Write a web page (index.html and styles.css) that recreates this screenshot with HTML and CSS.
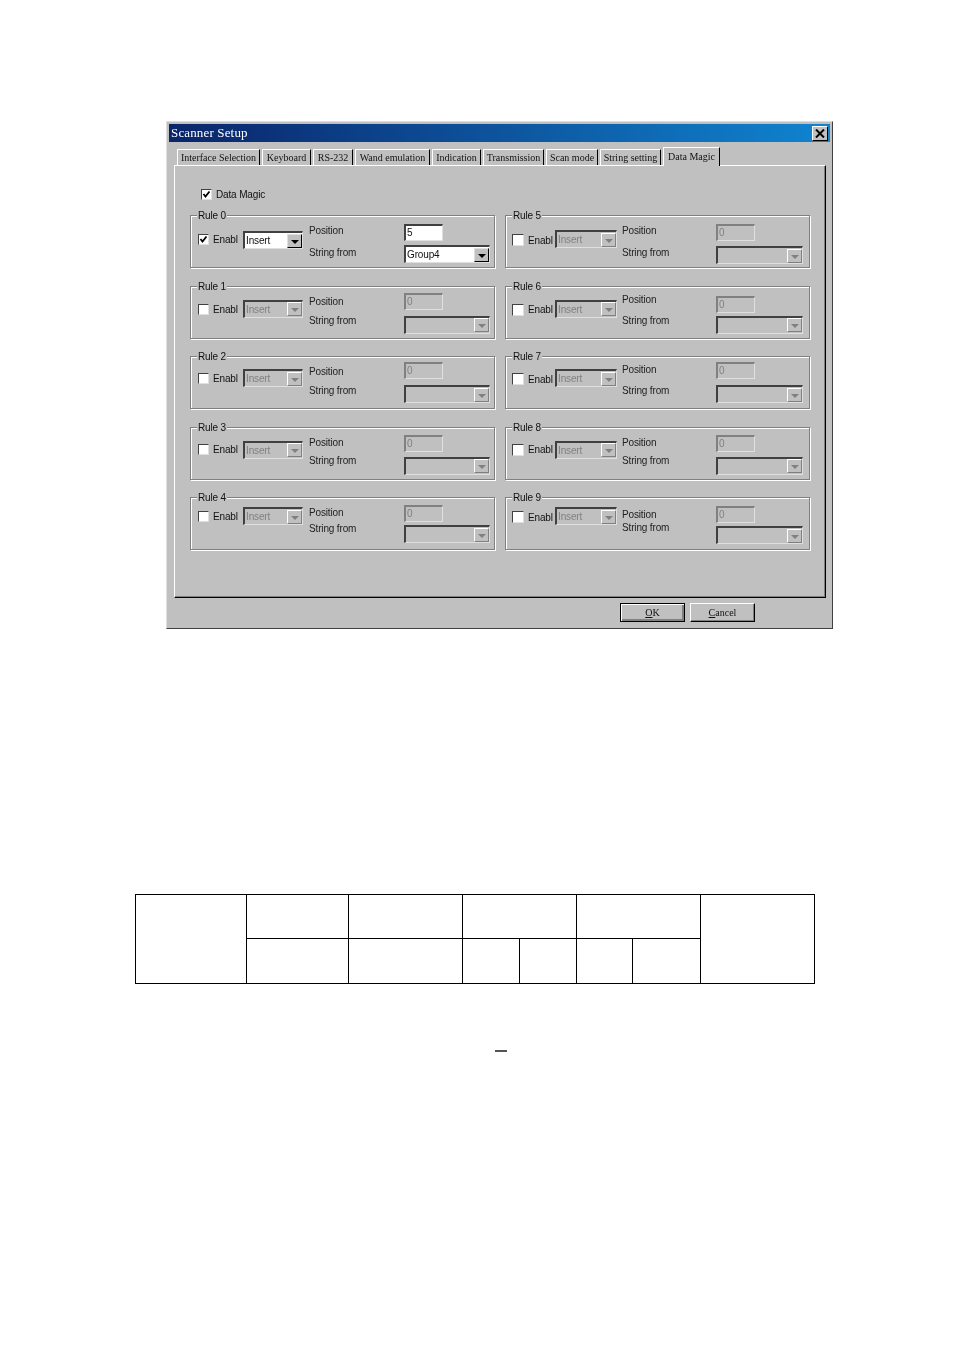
FILE: index.html
```html
<!DOCTYPE html>
<html lang="en">
<head>
    <meta charset="UTF-8">
    <title>Scanner Setup</title>
    <link rel="stylesheet" href="styles.css">
</head>
<body>
    <div class="window">
        <div class="title-bar">
            <span>Scanner Setup</span>
            <div class="close-btn">
                <svg width="10" height="9" viewBox="0 0 10 9"><path d="M1 0.5 L9 8.5 M9 0.5 L1 8.5" stroke="#000" stroke-width="2" fill="none"/></svg>
            </div>
        </div>

        <div class="tabs">
            <div class="tab">Interface Selection</div>
            <div class="tab">Keyboard</div>
            <div class="tab">RS-232</div>
            <div class="tab">Wand emulation</div>
            <div class="tab">Indication</div>
            <div class="tab">Transmission</div>
            <div class="tab">Scan mode</div>
            <div class="tab">String setting</div>
            <div class="tab active">Data Magic</div>
        </div>

        <div class="panel">
            <div class="data-magic">
                <div class="checkbox"><svg width="9" height="9" viewBox="0 0 9 9"><path d="M1.5 4 L3.5 6.5 L7.5 1.5" stroke="#000" stroke-width="1.8" fill="none"/></svg></div>
                <span>Data Magic</span>
            </div>

            <div class="rules">
                <div class="rule rule-0">
                    <div class="legend">Rule 0</div>
                    <div class="enable">
                        <div class="checkbox"><svg width="9" height="9" viewBox="0 0 9 9"><path d="M1.5 4 L3.5 6.5 L7.5 1.5" stroke="#000" stroke-width="1.8" fill="none"/></svg></div>
                        <div class="enable-text">Enable</div>
                    </div>
                    <div class="combo mode"><span>Insert</span><div class="arrow"></div></div>
                    <div class="labels"><div class="pos-label">Position</div><div class="str-label">String from</div></div>
                    <div class="fields">
                        <div class="input">5</div>
                        <div class="combo source"><span>Group4</span><div class="arrow"></div></div>
                    </div>
                </div>

                <div class="rule right rule-5">
                    <div class="legend">Rule 5</div>
                    <div class="enable"><div class="checkbox"></div><div class="enable-text">Enable</div></div>
                    <div class="combo mode off"><span>Insert</span><div class="arrow"></div></div>
                    <div class="labels"><div class="pos-label">Position</div><div class="str-label">String from</div></div>
                    <div class="fields"><div class="input off">0</div><div class="combo source off"><span></span><div class="arrow"></div></div></div>
                </div>

                <div class="rule rule-1">
                    <div class="legend">Rule 1</div>
                    <div class="enable"><div class="checkbox"></div><div class="enable-text">Enable</div></div>
                    <div class="combo mode off"><span>Insert</span><div class="arrow"></div></div>
                    <div class="labels"><div class="pos-label">Position</div><div class="str-label">String from</div></div>
                    <div class="fields"><div class="input off">0</div><div class="combo source off"><span></span><div class="arrow"></div></div></div>
                </div>

                <div class="rule right rule-6">
                    <div class="legend">Rule 6</div>
                    <div class="enable"><div class="checkbox"></div><div class="enable-text">Enable</div></div>
                    <div class="combo mode off"><span>Insert</span><div class="arrow"></div></div>
                    <div class="labels"><div class="pos-label">Position</div><div class="str-label">String from</div></div>
                    <div class="fields"><div class="input off">0</div><div class="combo source off"><span></span><div class="arrow"></div></div></div>
                </div>

                <div class="rule rule-2">
                    <div class="legend">Rule 2</div>
                    <div class="enable"><div class="checkbox"></div><div class="enable-text">Enable</div></div>
                    <div class="combo mode off"><span>Insert</span><div class="arrow"></div></div>
                    <div class="labels"><div class="pos-label">Position</div><div class="str-label">String from</div></div>
                    <div class="fields"><div class="input off">0</div><div class="combo source off"><span></span><div class="arrow"></div></div></div>
                </div>

                <div class="rule right rule-7">
                    <div class="legend">Rule 7</div>
                    <div class="enable"><div class="checkbox"></div><div class="enable-text">Enable</div></div>
                    <div class="combo mode off"><span>Insert</span><div class="arrow"></div></div>
                    <div class="labels"><div class="pos-label">Position</div><div class="str-label">String from</div></div>
                    <div class="fields"><div class="input off">0</div><div class="combo source off"><span></span><div class="arrow"></div></div></div>
                </div>

                <div class="rule rule-3">
                    <div class="legend">Rule 3</div>
                    <div class="enable"><div class="checkbox"></div><div class="enable-text">Enable</div></div>
                    <div class="combo mode off"><span>Insert</span><div class="arrow"></div></div>
                    <div class="labels"><div class="pos-label">Position</div><div class="str-label">String from</div></div>
                    <div class="fields"><div class="input off">0</div><div class="combo source off"><span></span><div class="arrow"></div></div></div>
                </div>

                <div class="rule right rule-8">
                    <div class="legend">Rule 8</div>
                    <div class="enable"><div class="checkbox"></div><div class="enable-text">Enable</div></div>
                    <div class="combo mode off"><span>Insert</span><div class="arrow"></div></div>
                    <div class="labels"><div class="pos-label">Position</div><div class="str-label">String from</div></div>
                    <div class="fields"><div class="input off">0</div><div class="combo source off"><span></span><div class="arrow"></div></div></div>
                </div>

                <div class="rule rule-4">
                    <div class="legend">Rule 4</div>
                    <div class="enable"><div class="checkbox"></div><div class="enable-text">Enable</div></div>
                    <div class="combo mode off"><span>Insert</span><div class="arrow"></div></div>
                    <div class="labels"><div class="pos-label">Position</div><div class="str-label">String from</div></div>
                    <div class="fields"><div class="input off">0</div><div class="combo source off"><span></span><div class="arrow"></div></div></div>
                </div>

                <div class="rule right rule-9">
                    <div class="legend">Rule 9</div>
                    <div class="enable"><div class="checkbox"></div><div class="enable-text">Enable</div></div>
                    <div class="combo mode off"><span>Insert</span><div class="arrow"></div></div>
                    <div class="labels"><div class="pos-label">Position</div><div class="str-label">String from</div></div>
                    <div class="fields"><div class="input off">0</div><div class="combo source off"><span></span><div class="arrow"></div></div></div>
                </div>
            </div>
        </div>

        <div class="footer">
            <div class="btn default"><u>O</u>K</div>
            <div class="btn"><u>C</u>ancel</div>
        </div>
    </div>

    <table class="doc-table">
        <colgroup>
            <col class="c1"><col class="c2"><col class="c3"><col class="c4"><col class="c4"><col class="c5"><col class="c6"><col class="c7">
        </colgroup>
        <tr>
            <td rowspan="2"></td>
            <td></td>
            <td></td>
            <td colspan="2"></td>
            <td colspan="2"></td>
            <td rowspan="2"></td>
        </tr>
        <tr>
            <td></td>
            <td></td>
            <td></td>
            <td></td>
            <td></td>
            <td></td>
        </tr>
    </table>

    <div class="dash"></div>
</body>
</html>
```

FILE: styles.css
```css
:root {
    --face: #c0c0c0;
    --shadow: #808080;
    --sans: "Liberation Sans", Arial, sans-serif;
    --serif: "Liberation Serif", "Times New Roman", serif;
}

* {
    margin: 0;
    padding: 0;
    box-sizing: border-box;
}

body {
    background: #fff;
    height: 1350px;
    overflow: hidden;
    padding-top: 121px;
    font-family: var(--sans);
    font-size: 10px;
    letter-spacing: -0.15px;
    color: #111;
}

.window {
    width: 667px;
    height: 508px;
    margin-left: 166px;
    padding: 2px;
    background: var(--face);
    border: 1px solid;
    border-color: #dfdfdf #404040 #404040 #dfdfdf;
    filter: blur(0.3px);
}

.title-bar {
    height: 18px;
    display: flex;
    align-items: center;
    justify-content: space-between;
    padding: 0 2px;
    background: linear-gradient(90deg, #0a246a, #1084d0);
    color: #fff;
    font-family: var(--serif);
    font-size: 13px;
    letter-spacing: 0.15px;
}

.close-btn {
    width: 16px;
    height: 15px;
    display: flex;
    align-items: center;
    justify-content: center;
    background: var(--face);
    border: 1px solid;
    border-color: #fff #000 #000 #fff;
}

.tabs {
    display: flex;
    gap: 2px;
    height: 18px;
    margin: 5px 0 0 8px;
    font-family: var(--serif);
    letter-spacing: 0;
    position: relative;
    z-index: 1;
}

.tab {
    height: 16px;
    margin-top: 2px;
    line-height: 15px;
    text-align: center;
    white-space: nowrap;
    background: var(--face);
    border: 1px solid;
    border-color: #fff #000 transparent #fff;
    border-bottom: 0;
}

.tab:nth-child(1) { width: 83px; }
.tab:nth-child(2) { width: 49px; }
.tab:nth-child(3) { width: 40px; }
.tab:nth-child(4) { width: 75px; }
.tab:nth-child(5) { width: 49px; }
.tab:nth-child(6) { width: 61px; }
.tab:nth-child(7) { width: 52px; }
.tab:nth-child(8) { width: 61px; }

.tab.active {
    width: 57px;
    height: 19px;
    margin-top: 0;
    line-height: 17px;
}

.panel {
    height: 433px;
    margin: 0 4px 0 5px;
    padding: 23px 0 0 15px;
    border: 1px solid;
    border-color: #fff #000 #000 #fff;
    box-shadow: inset -1px -1px 0 var(--shadow);
}

.data-magic {
    display: flex;
    align-items: center;
    gap: 4px;
    height: 11px;
    margin-left: 11px;
}

.checkbox {
    width: 11px;
    height: 11px;
    flex: none;
    display: flex;
    align-items: center;
    justify-content: center;
    background: #fff;
    border: 1px solid;
    border-color: #404040 #dfdfdf #dfdfdf #404040;
}

.rules {
    display: grid;
    grid-template-columns: 305px 305px;
    grid-auto-rows: 53px;
    gap: 17.5px 10px;
    margin-top: 15px;
}

/* top offsets differ a little from rule to rule in the original dialog */
.rule-0 { --check: 19px; --combo: 16px; --pos: 10px; --str: 32px; --input: 9px; --field: 30px; }
.rule-1 { --check: 18px; --combo: 14px; --pos: 10px; --str: 29px; --input: 7px; --field: 30px; }
.rule-2 { --check: 17px; --combo: 13px; --pos: 10px; --str: 29px; --input: 6px; --field: 29px; }
.rule-3 { --check: 17px; --combo: 14px; --pos: 10px; --str: 28px; --input: 8px; --field: 30px; }
.rule-4 { --check: 14px; --combo: 10px; --pos: 10px; --str: 26px; --input: 8px; --field: 28px; }
.rule-5 { --check: 19px; --combo: 15px; --pos: 10px; --str: 32px; --input: 9px; --field: 31px; }
.rule-6 { --check: 18px; --combo: 14px; --pos: 8px; --str: 29px; --input: 10px; --field: 30px; }
.rule-7 { --check: 17px; --combo: 13px; --pos: 8px; --str: 29px; --input: 6px; --field: 29px; }
.rule-8 { --check: 17px; --combo: 14px; --pos: 10px; --str: 28px; --input: 8px; --field: 30px; }
.rule-9 { --check: 14px; --combo: 10px; --pos: 12px; --str: 25px; --input: 9px; --field: 29px; }

.rule {
    position: relative;
    display: flex;
    align-items: flex-start;
    padding-left: 7px;
    border: 1px solid var(--shadow);
    box-shadow: 1px 1px 0 #fff, inset 1px 1px 0 #fff;
}

.rule.right {
    padding-left: 6px;
}

.legend {
    position: absolute;
    top: -6px;
    left: 6px;
    padding: 0 1px;
    line-height: 12px;
    background: var(--face);
}

.enable {
    display: flex;
    align-items: center;
    margin-top: calc(var(--check) - 1px);
}

.enable-text {
    width: 25px;
    margin-left: 4px;
    overflow: hidden;
    white-space: nowrap;
}

.right .checkbox {
    width: 12px;
    height: 12px;
}

.combo {
    display: flex;
    align-items: center;
    justify-content: space-between;
    height: 18px;
    padding-left: 1px;
    background: #fff;
    border: 2px solid;
    border-color: #404040 #dfdfdf #dfdfdf #404040;
    border-right-width: 1px;
    border-bottom-width: 1px;
    overflow: hidden;
}

.combo.off {
    background: var(--face);
    color: var(--shadow);
}

.combo.mode {
    width: 60px;
    margin: calc(var(--combo) - 1px) 0 0 5px;
}

.right .combo.mode {
    width: 62px;
    margin-left: 2px;
}

.arrow {
    position: relative;
    width: 15px;
    height: 14px;
    flex: none;
    background: var(--face);
    border: 1px solid;
    border-color: #dfdfdf #000 #000 #dfdfdf;
}

.arrow::after {
    content: "";
    position: absolute;
    top: 5px;
    left: 3px;
    border: 4px solid transparent;
    border-top: 4px solid #000;
    border-bottom: 0;
}

.off .arrow {
    border-color: #fff var(--shadow) var(--shadow) #fff;
}

.off .arrow::after {
    border-top-color: var(--shadow);
}

.labels {
    width: 95px;
    margin-left: 6px;
    line-height: 12px;
    white-space: nowrap;
    color: #222;
}

.right .labels {
    width: 94px;
    margin-left: 5px;
}

.pos-label {
    margin-top: calc(var(--pos) - 1px);
}

.str-label {
    margin-top: calc(var(--str) - var(--pos) - 12px);
}

.fields {
    width: 86px;
}

.right .fields {
    width: 87px;
}

.input {
    width: 39px;
    height: 17px;
    margin-top: calc(var(--input) - 1px);
    padding-left: 1px;
    line-height: 13px;
    background: #fff;
    border: 2px solid;
    border-color: #404040 #dfdfdf #dfdfdf #404040;
    border-right-width: 1px;
    border-bottom-width: 1px;
}

.input.off {
    background: var(--face);
    color: var(--shadow);
    border-color: var(--shadow) #dfdfdf #dfdfdf var(--shadow);
}

.combo.source {
    margin-top: calc(var(--field) - var(--input) - 17px);
}

.footer {
    display: flex;
    justify-content: flex-end;
    gap: 5px;
    margin: 5px 75px 0 0;
}

.btn {
    width: 65px;
    height: 19px;
    line-height: 17px;
    text-align: center;
    font-family: var(--serif);
    letter-spacing: 0;
    background: var(--face);
    border: 1px solid;
    border-color: #fff #000 #000 #fff;
    box-shadow: inset -1px -1px 0 var(--shadow);
}

.btn.default {
    outline: 1px solid #000;
    outline-offset: -1px;
    box-shadow: inset 1px 1px 0 #fff, inset -2px -2px 0 var(--shadow);
}

.doc-table {
    width: 680px;
    height: 89px;
    margin: 265px 0 0 135px;
    border-collapse: collapse;
    table-layout: fixed;
    border: 1px solid #000;
}

.doc-table td {
    border: 1px solid #000;
    height: 45px;
}

.doc-table tr:first-child td {
    height: 44px;
}

.c1 { width: 111px; }
.c2 { width: 102px; }
.c3 { width: 114px; }
.c4 { width: 57px; }
.c5 { width: 56px; }
.c6 { width: 68px; }
.c7 { width: 114px; }

.dash {
    width: 12px;
    height: 2px;
    margin: 66px 0 0 495px;
    background: #555;
}
```
